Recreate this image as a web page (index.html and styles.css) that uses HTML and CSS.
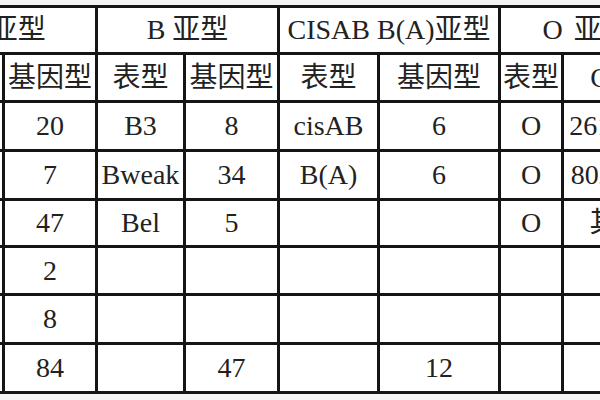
FILE: index.html
```html
<!DOCTYPE html>
<html lang="zh">
<head>
<meta charset="utf-8">
<link rel="stylesheet" href="styles.css">
</head>
<body>
<div class="frame">
<table class="grid">
  <colgroup>
    <col class="c-a1"><col class="c-a2"><col class="c-b1"><col class="c-b2">
    <col class="c-c1"><col class="c-c2"><col class="c-o1"><col class="c-o2">
  </colgroup>
  <tr class="r-h1">
    <td colspan="2">A 亚型</td>
    <td colspan="2">B 亚型</td>
    <td colspan="2" class="cis">CISAB B(A)亚型</td>
    <td colspan="2" class="o-head">O 亚型</td>
  </tr>
  <tr class="r-h2">
    <td>表型</td><td>基因型</td><td>表型</td><td>基因型</td>
    <td>表型</td><td>基因型</td><td>表型</td><td>CDS</td>
  </tr>
  <tr class="r-1">
    <td>A3</td><td>20</td><td>B3</td><td>8</td><td>cisAB</td><td>6</td><td>O</td><td>261delG</td>
  </tr>
  <tr class="r-2">
    <td>Ax</td><td>7</td><td>Bweak</td><td>34</td><td>B(A)</td><td>6</td><td>O</td><td>802C&gt;T</td>
  </tr>
  <tr class="r-3">
    <td>Ael</td><td>47</td><td>Bel</td><td>5</td><td></td><td></td><td>O</td><td>其他</td>
  </tr>
  <tr class="r-4">
    <td>Am</td><td>2</td><td></td><td></td><td></td><td></td><td></td><td></td>
  </tr>
  <tr class="r-5">
    <td>Aweak</td><td>8</td><td></td><td></td><td></td><td></td><td></td><td></td>
  </tr>
  <tr class="r-6">
    <td>合计</td><td>84</td><td></td><td>47</td><td></td><td>12</td><td></td><td></td>
  </tr>
</table>
</div>
</body>
</html>
```
FILE: styles.css
```css
html, body {
  margin: 0;
  padding: 0;
  background: #f3f3f3;
  overflow: hidden;
  width: 600px;
  height: 400px;
}
.frame {
  width: 600px;
  height: 400px;
  overflow: hidden;
  padding-top: 5px;
  box-sizing: border-box;
}
.grid {
  border-collapse: collapse;
  table-layout: fixed;
  width: 759px;
  margin-left: -88px;
  background: #fff;
  font-family: "Liberation Serif", "Noto Sans CJK SC", serif;
  font-size: 28px;
  color: #222;
}
.grid td {
  border: 3px solid #151515;
  text-align: center;
  vertical-align: middle;
  padding: 0;
  white-space: nowrap;
  overflow: hidden;
  line-height: 1;
}
.c-a1 { width: 90px; }
.c-a2 { width: 93px; }
.c-b1 { width: 88px; }
.c-b2 { width: 94px; }
.c-c1 { width: 100px; }
.c-c2 { width: 121px; }
.c-o1 { width: 63px; }
.c-o2 { width: 110px; }
.grid td.cis { overflow: visible; }
.grid td.o-head { word-spacing: 4px; }
.r-h1 { height: 47px; }
.r-h2 { height: 48px; }
.r-1 { height: 49px; }
.r-2 { height: 49px; }
.r-3 { height: 47px; }
.r-4 { height: 48px; }
.r-5 { height: 49px; }
.r-6 { height: 49px; }
```
